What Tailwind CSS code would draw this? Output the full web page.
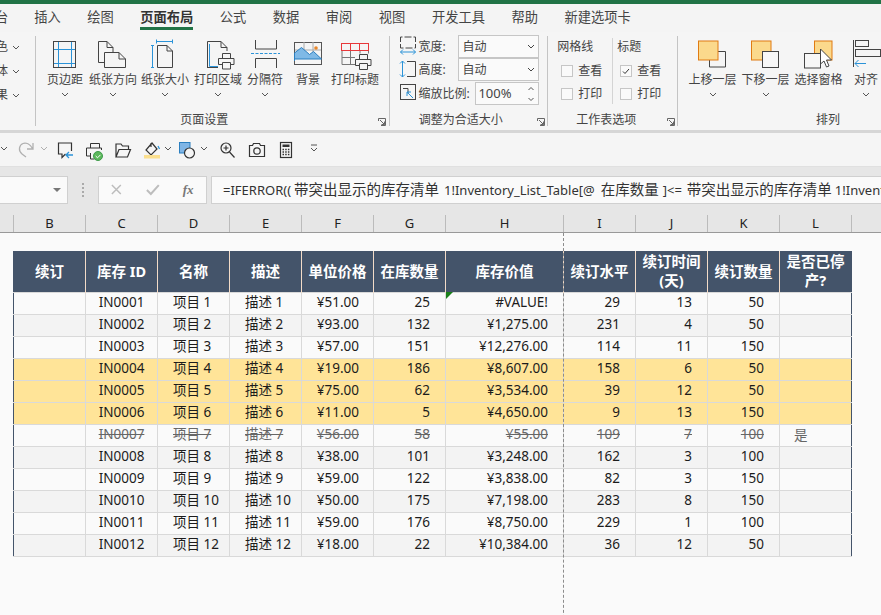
<!DOCTYPE html>
<html lang="zh">
<head>
    <meta charset="UTF-8">
    <title>库存清单</title>
    <script src="https://cdn.jsdelivr.net/npm/@tailwindcss/browser@4"></script>
</head>
<body class="w-[881px] h-[615px] overflow-hidden bg-[#fafafa] text-[#444] text-[12px] font-['Noto_Sans','Noto_Sans_CJK_SC',sans-serif]">

    <!-- Title strip -->
    <div class="h-[4px] bg-[#217346]"></div>

    <!-- Tabs -->
    <nav class="h-[28px] bg-[#f4f4f4] flex items-center gap-[26.5px] text-[13.25px] text-[#444] whitespace-nowrap -ml-[5px]">
        <span>台</span>
        <span class="-ml-[0.5px]">插入</span>
        <span>绘图</span>
        <span class="relative font-bold text-[#333]">页面布局<span class="absolute left-0 right-0 top-[19px] h-[3px] bg-[#217346]"></span></span>
        <span>公式</span>
        <span>数据</span>
        <span>审阅</span>
        <span>视图</span>
        <span>开发工具</span>
        <span>帮助</span>
        <span>新建选项卡</span>
    </nav>

    <!-- Ribbon -->
    <div class="h-[98px] bg-[#f5f5f5] flex overflow-hidden">
        <!-- Clipped first group -->
        <div class="w-[35px] pt-[3px] flex flex-col">
            <div class="h-[24px] flex items-center -ml-[4px] gap-[4px]"><span>色</span><svg class="w-[8px] h-[5px]" viewBox="0 0 8 5" fill="none" stroke="#555"><path d="M1 1l3 3 3-3"/></svg></div>
            <div class="h-[24px] flex items-center -ml-[4px] gap-[4px]"><span>体</span><svg class="w-[8px] h-[5px]" viewBox="0 0 8 5" fill="none" stroke="#555"><path d="M1 1l3 3 3-3"/></svg></div>
            <div class="h-[24px] flex items-center -ml-[4px] gap-[4px]"><span>果</span><svg class="w-[8px] h-[5px]" viewBox="0 0 8 5" fill="none" stroke="#555"><path d="M1 1l3 3 3-3"/></svg></div>
        </div>
        <div class="w-px my-1 bg-[#c4c4c4]"></div>

        <!-- 页面设置 -->
        <div class="relative w-[354px] pl-[5px] pt-[6px] flex flex-col">
            <div class="flex">
                <div class="w-[48px] flex flex-col items-center">
                    <svg class="w-[48px] h-[32px]" viewBox="41 38 48 32" fill="none"><path d="M58.5 41v27M71.5 41v27M53 49.5h23M53 63.5h23" stroke="#2b93d8"/><rect x="53.5" y="41.5" width="22" height="26" stroke="#444"/></svg>
                    <span class="leading-[18px] mt-[1px] whitespace-nowrap">页边距</span>
                    <svg class="w-[8px] h-[5px] mt-[3px]" viewBox="0 0 8 5" fill="none" stroke="#555"><path d="M1 1l3 3 3-3"/></svg>
                </div>
                <div class="w-[48px] flex flex-col items-center">
                    <svg class="w-[48px] h-[32px]" viewBox="89 38 48 32" fill="none" stroke="#444"><path d="M104 62.5h-5.500v-21H107l6 6v4.500M107 41.500v6h6"/><path d="M104.500 52.500H119l6.500 6.500v8.500h-21zM119 52.500V59h6.500"/></svg>
                    <span class="leading-[18px] mt-[1px] whitespace-nowrap">纸张方向</span>
                    <svg class="w-[8px] h-[5px] mt-[3px]" viewBox="0 0 8 5" fill="none" stroke="#555"><path d="M1 1l3 3 3-3"/></svg>
                </div>
                <div class="w-[56px] flex flex-col items-center">
                    <svg class="w-[56px] h-[32px]" viewBox="137 38 56 32" fill="none"><path d="M156 41.500h17M156.500 39.500v4M172.500 39.500v4M152.500 45v23M151 45.500h3M151 67.500h3" stroke="#2b93d8"/><path d="M157.500 45.500H167l5.500 5.500v16.500h-15zM167 45.500V51h5.500" stroke="#444"/></svg>
                    <span class="leading-[18px] mt-[1px] whitespace-nowrap">纸张大小</span>
                    <svg class="w-[8px] h-[5px] mt-[3px]" viewBox="0 0 8 5" fill="none" stroke="#555"><path d="M1 1l3 3 3-3"/></svg>
                </div>
                <div class="w-[50px] flex flex-col items-center">
                    <svg class="w-[50px] h-[32px]" viewBox="193 38 50 32" fill="none"><path d="M207.500 68V41.500H221l6 6V51M221 41.500v6h6" stroke="#444"/><path d="M209.500 44v22.500H218" stroke="#2b93d8"/><path d="M207.500 67.500H218" stroke="#444"/><path d="M222.500 58.500v-5h8v5M222.500 64.500h-4v-6h15.500v6h-3.500M222.500 62.500h8v6.500h-8z" stroke="#444" fill="#f5f5f5"/></svg>
                    <span class="leading-[18px] mt-[1px] whitespace-nowrap">打印区域</span>
                    <svg class="w-[8px] h-[5px] mt-[3px]" viewBox="0 0 8 5" fill="none" stroke="#555"><path d="M1 1l3 3 3-3"/></svg>
                </div>
                <div class="w-[44px] flex flex-col items-center">
                    <svg class="w-[44px] h-[32px]" viewBox="243 38 44 32" fill="none"><path d="M255.500 40v9h21v-9M255.500 68v-9.500h21V68" stroke="#444"/><path d="M251 53.500h29" stroke="#2b93d8" stroke-dasharray="3 1.500"/></svg>
                    <span class="leading-[18px] mt-[1px] whitespace-nowrap">分隔符</span>
                    <svg class="w-[8px] h-[5px] mt-[3px]" viewBox="0 0 8 5" fill="none" stroke="#555"><path d="M1 1l3 3 3-3"/></svg>
                </div>
                <div class="w-[42px] flex flex-col items-center">
                    <svg class="w-[42px] h-[32px]" viewBox="287 38 42 32" fill="none"><rect x="294.500" y="42.500" width="27" height="22" stroke="#555"/><path d="M304 42v10M313 42v10M295 50h26" stroke="#aaa"/><path d="M294.500 61v-8l7-5.500 8 7 4-3 8 7.500H294.500z" fill="#7fb9e6" stroke="#2b7fc0"/><circle cx="316" cy="48" r="1.800" fill="#e8862a"/></svg>
                    <span class="leading-[18px] mt-[1px] whitespace-nowrap">背景</span>
                </div>
                <div class="w-[52px] flex flex-col items-center">
                    <svg class="w-[52px] h-[32px]" viewBox="329 38 52 32" fill="none"><path d="M342 50.500v14h13M342 57.500h13M350.500 50.500v14M360 50.500v3M368.500 50.500v3" stroke="#777"/><rect x="341.500" y="43.500" width="27" height="7" stroke="#e8383a"/><path d="M350.500 43.500v7M359.500 43.500v7" stroke="#e8383a"/><path d="M359.500 59.500v-5h8v5M359.500 65.500h-4v-6h15.500v6h-3.500M359.500 63.500h8v6h-8z" stroke="#444" fill="#f5f5f5"/></svg>
                    <span class="leading-[18px] mt-[1px] whitespace-nowrap">打印标题</span>
                </div>
            </div>
            <div class="mt-auto mb-[1px] leading-[18px] text-center pr-[22px]">页面设置</div>
            <svg class="absolute right-[3px] bottom-[4px] w-[8px] h-[8px]" viewBox="0 0 8 8" fill="none" stroke="#666"><path d="M.5 3V.5h7v7H3M2 2l4.500 4.500M6.500 3.500v3h-3"/></svg>
        </div>
        <div class="w-px my-1 bg-[#c4c4c4]"></div>

        <!-- 调整为合适大小 -->
        <div class="relative w-[157px] pt-[3px] flex flex-col">
            <div class="flex items-center h-[23px]">
                <svg class="w-[28px] h-[23px]" viewBox="391 35 28 23" fill="none"><path d="M401.500 42v-5h15v5M401.500 44v4h15v-4" stroke="#444" stroke-dasharray="7 2"/><path d="M401.500 52h15M404 49.500L401.500 52l2.500 2.500M414 49.500l2.500 2.500-2.500 2.500" stroke="#2b93d8"/></svg>
                <span class="w-[40px] leading-[18px]">宽度:</span>
                <div class="w-[81px] h-[23px] border border-[#c6c6c6] bg-[#fafafa] flex items-center justify-between pl-[3px] pr-[3px]"><span>自动</span><svg class="w-[8px] h-[5px]" viewBox="0 0 8 5" fill="none" stroke="#444"><path d="M1 1l3 3 3-3"/></svg></div>
            </div>
            <div class="flex items-center h-[23px]">
                <svg class="w-[28px] h-[23px]" viewBox="391 58 28 23" fill="none"><path d="M403.500 61v16M401 63.500l2.500-2.500 2.500 2.500M401 74.500l2.500 2.500 2.500-2.500" stroke="#2b93d8"/><path d="M408 61.500h8.500v15H408" stroke="#444"/></svg>
                <span class="w-[40px] leading-[18px]">高度:</span>
                <div class="w-[81px] h-[23px] border border-[#c6c6c6] bg-[#fafafa] flex items-center justify-between pl-[3px] pr-[3px]"><span>自动</span><svg class="w-[8px] h-[5px]" viewBox="0 0 8 5" fill="none" stroke="#444"><path d="M1 1l3 3 3-3"/></svg></div>
            </div>
            <div class="flex items-center h-[23px] mt-[1px]">
                <svg class="w-[28px] h-[23px]" viewBox="391 82 28 23" fill="none"><rect x="401.500" y="84.500" width="15" height="15" stroke="#444"/><path d="M405 88.500h4v5M405 88.500h-1" stroke="#444"/><path d="M414 98l-6-6M408 96v-4h4" stroke="#2b93d8"/></svg>
                <span class="w-[57px] leading-[18px] whitespace-nowrap">缩放比例:</span>
                <div class="w-[64px] h-[23px] border border-[#c6c6c6] bg-[#fafafa] flex items-center justify-between pl-[2px] pr-[3px]"><span class="text-[13px]">100%</span><svg class="w-[8px] h-[16px]" viewBox="0 0 8 16" fill="none" stroke="#555"><path d="M1.500 4L4 1.500 6.500 4M1.500 12L4 14.500 6.500 12"/></svg></div>
            </div>
            <div class="mt-auto mb-[1px] leading-[18px] text-center pr-[16px]">调整为合适大小</div>
            <svg class="absolute right-[2px] bottom-[4px] w-[8px] h-[8px]" viewBox="0 0 8 8" fill="none" stroke="#666"><path d="M.5 3V.5h7v7H3M2 2l4.500 4.500M6.500 3.500v3h-3"/></svg>
        </div>
        <div class="w-px my-1 bg-[#c4c4c4]"></div>

        <!-- 工作表选项 -->
        <div class="relative w-[129px] flex flex-col">
            <div class="flex pt-[6px]">
                <div class="w-[65px] border-r border-[#d4d4d4] pl-[9px] h-[66px] flex flex-col">
                    <span class="leading-[18px]">网格线</span>
                    <div class="flex items-center mt-[6px] h-[18px]"><span class="w-[12px] h-[12px] border border-[#c6c6c6] bg-[#fafafa] ml-[4px] mr-[5px]"></span><span>查看</span></div>
                    <div class="flex items-center mt-[5px] h-[18px]"><span class="w-[12px] h-[12px] border border-[#c6c6c6] bg-[#fafafa] ml-[4px] mr-[5px]"></span><span>打印</span></div>
                </div>
                <div class="pl-[4px] flex flex-col">
                    <span class="leading-[18px]">标题</span>
                    <div class="flex items-center mt-[6px] h-[18px]"><span class="w-[12px] h-[12px] border border-[#c6c6c6] bg-[#fafafa] ml-[3px] mr-[5px] flex items-center justify-center"><svg class="w-[8px] h-[7px]" viewBox="0 0 8 7" fill="none" stroke="#333"><path d="M1 3.500L3 5.500 7 1"/></svg></span><span>查看</span></div>
                    <div class="flex items-center mt-[5px] h-[18px]"><span class="w-[12px] h-[12px] border border-[#c6c6c6] bg-[#fafafa] ml-[3px] mr-[5px]"></span><span>打印</span></div>
                </div>
            </div>
            <div class="mt-auto mb-[1px] leading-[18px] pl-[28px]">工作表选项</div>
            <svg class="absolute right-[2px] bottom-[4px] w-[8px] h-[8px]" viewBox="0 0 8 8" fill="none" stroke="#666"><path d="M.5 3V.5h7v7H3M2 2l4.500 4.500M6.500 3.500v3h-3"/></svg>
        </div>
        <div class="w-px my-1 bg-[#c4c4c4]"></div>

        <!-- 排列 -->
        <div class="w-[203px] pl-[8px] pt-[6px] flex flex-col">
            <div class="flex">
                <div class="w-[53px] flex flex-col items-center">
                    <svg class="w-[53px] h-[32px]" viewBox="686 38 53 32" fill="none"><path d="M718 51.500h7.500v15.500H709.500v-7" stroke="#444"/><rect x="698.500" y="41" width="19.500" height="19" fill="#fbd98c" stroke="#e07b12"/></svg>
                    <span class="leading-[18px] mt-[1px] whitespace-nowrap">上移一层</span>
                    <svg class="w-[8px] h-[5px] mt-[3px]" viewBox="0 0 8 5" fill="none" stroke="#555"><path d="M1 1l3 3 3-3"/></svg>
                </div>
                <div class="w-[53px] flex flex-col items-center">
                    <svg class="w-[53px] h-[32px]" viewBox="739 38 53 32" fill="none"><rect x="751.500" y="41" width="19.500" height="19" fill="#fbd98c" stroke="#e07b12"/><rect x="762.500" y="51.500" width="16" height="16" fill="#f7f7f7" stroke="#444"/></svg>
                    <span class="leading-[18px] mt-[1px] whitespace-nowrap">下移一层</span>
                    <svg class="w-[8px] h-[5px] mt-[3px]" viewBox="0 0 8 5" fill="none" stroke="#555"><path d="M1 1l3 3 3-3"/></svg>
                </div>
                <div class="w-[53px] flex flex-col items-center">
                    <svg class="w-[53px] h-[32px]" viewBox="792 38 53 32" fill="none"><rect x="814.500" y="41" width="17.500" height="19" fill="#fbd98c" stroke="#e07b12"/><rect x="804.500" y="53.500" width="16" height="14.500" fill="#f7f7f7" stroke="#444"/><path d="M820.500 49v15l3.500-3 2.500 6 2.500-1-2.500-6h5z" fill="#fff" stroke="#444"/></svg>
                    <span class="leading-[18px] mt-[1px] whitespace-nowrap">选择窗格</span>
                </div>
                <div class="w-[42px] flex flex-col items-center">
                    <svg class="w-[42px] h-[32px]" viewBox="845 38 42 32" fill="none"><path d="M853.500 40v27" stroke="#444"/><rect x="855.500" y="40.500" width="13" height="6" stroke="#444"/><rect x="855.500" y="49.500" width="25" height="7" stroke="#444"/><path d="M855 63.500h11M858.500 60L855 63.500l3.500 3.500" stroke="#2b93d8"/></svg>
                    <span class="leading-[18px] mt-[1px] whitespace-nowrap">对齐</span>
                    <svg class="w-[8px] h-[5px] mt-[3px]" viewBox="0 0 8 5" fill="none" stroke="#555"><path d="M1 1l3 3 3-3"/></svg>
                </div>
            </div>
            <div class="mt-auto mb-[1px] leading-[18px] pl-[130px]">排列</div>
        </div>
    </div>
    <div class="h-[3px] bg-[#d6d6d6]"></div>

    <!-- Quick access toolbar -->
    <div class="h-[34px] bg-[#f5f5f5] flex border-b border-[#e0e0e0]">
        <svg class="w-[12px] h-[34px]" viewBox="0 133 12 34" fill="none" stroke="#555"><path d="M1 147l3 3 3-3"/></svg>
        <svg class="w-[28px] h-[34px]" viewBox="12 133 28 34" fill="none" stroke="#b0b0b0" stroke-width="1.300"><path d="M33 143v6h-6M32.500 148.500C30 144 26 142.500 23 143.500 19 145 18 151 22 154l4 3"/></svg>
        <svg class="w-[10px] h-[34px]" viewBox="40 133 10 34" fill="none" stroke="#b0b0b0"><path d="M41 147l3 3 3-3"/></svg>
        <svg class="w-[30px] h-[34px]" viewBox="50 133 30 34" fill="none"><path d="M71.500 151v-8H58.500v11H62v3.500l3.500-3.500" stroke="#333" stroke-width="1.200"/><path d="M73 155h-7M69 152l-3 3 3 3" stroke="#2b93d8" stroke-width="1.300"/></svg>
        <svg class="w-[30px] h-[34px]" viewBox="80 133 30 34" fill="none" stroke="#333"><path d="M90.500 148v-4.500h9v4.500M90 156h-3.500v-8h15v2M90.500 153v6h4"/><circle cx="98" cy="156" r="4.500" fill="#5cb85c" stroke="#3f9b4c"/><path d="M95.700 156l1.800 1.800 3-3" stroke="#fff"/></svg>
        <svg class="w-[30px] h-[34px]" viewBox="110 133 30 34" fill="none" stroke="#333" stroke-width="1.200"><path d="M116 157v-13h5l1.500 2h6v3.500M116 157l3-7.500h11.500l-3 7.500z"/></svg>
        <svg class="w-[24px] h-[34px]" viewBox="140 133 24 34" fill="none"><path d="M152 143l5 6-6 6-5-5zM151 143v4" stroke="#333" stroke-width="1.200"/><path d="M158 146l1.500 3" stroke="#2b93d8" stroke-width="1.300"/><rect x="144" y="155" width="16" height="3.500" fill="#fbdf8e"/></svg>
        <svg class="w-[10px] h-[34px]" viewBox="164 133 10 34" fill="none" stroke="#555"><path d="M165 147l3 3 3-3"/></svg>
        <svg class="w-[26px] h-[34px]" viewBox="174 133 26 34" fill="none"><rect x="179.500" y="142.500" width="10.500" height="10.500" fill="#7fb5e6" stroke="#2b7fc0"/><circle cx="189.500" cy="153" r="5" fill="#f5f5f5" stroke="#333" stroke-width="1.200"/></svg>
        <svg class="w-[10px] h-[34px]" viewBox="200 133 10 34" fill="none" stroke="#555"><path d="M201 147l3 3 3-3"/></svg>
        <svg class="w-[30px] h-[34px]" viewBox="210 133 30 34" fill="none" stroke="#333" stroke-width="1.200"><circle cx="226" cy="148" r="5"/><path d="M229.500 152l5 5.500M226 145.500v5M223.500 148h5"/></svg>
        <svg class="w-[29px] h-[34px]" viewBox="240 133 29 34" fill="none" stroke="#333" stroke-width="1.200"><path d="M249.500 145.500h3l1-2h6l1 2h4v11h-15z"/><circle cx="257" cy="151" r="3.200"/></svg>
        <svg class="w-[28px] h-[34px]" viewBox="269 133 28 34" fill="none"><rect x="280.500" y="142.500" width="11" height="15" stroke="#333" stroke-width="1.200"/><rect x="282.500" y="144.500" width="7" height="2.500" fill="#333"/><path d="M282.500 149.500h7M282.500 152h7M282.500 154.500h7" stroke="#333" stroke-width="1.300" stroke-dasharray="1.500 1.200"/></svg>
        <svg class="w-[30px] h-[34px]" viewBox="297 133 30 34" fill="none" stroke="#555"><path d="M311 145h6M311 148l3 3 3-3"/></svg>
    </div>

    <!-- Formula bar -->
    <div class="h-[46px] bg-[#e6e6e6] pt-[9px] flex items-start">
        <div class="w-[68px] h-[28px] bg-[#fafafa] border border-l-0 border-[#d0d0d0] flex items-center justify-end pr-[6px]">
            <span class="w-0 h-0 border-x-[4px] border-x-transparent border-t-[4px] border-t-[#777]"></span>
        </div>
        <div class="w-[30px] h-[28px] flex flex-col items-center justify-center gap-[2px]">
            <span class="w-[2px] h-[2px] bg-[#aaa]"></span><span class="w-[2px] h-[2px] bg-[#aaa]"></span><span class="w-[2px] h-[2px] bg-[#aaa]"></span><span class="w-[2px] h-[2px] bg-[#aaa]"></span>
        </div>
        <div class="w-[109px] h-[28px] bg-[#fafafa] border border-[#d0d0d0] flex items-center">
            <svg class="w-[36px] h-[26px]" viewBox="0 0 36 26" fill="none" stroke="#bdbdbd" stroke-width="1.500"><path d="M13 8l9 9M22 8l-9 9"/></svg>
            <svg class="w-[36px] h-[26px]" viewBox="0 0 36 26" fill="none" stroke="#bdbdbd" stroke-width="2"><path d="M12 13l4 4 8-9"/></svg>
            <span class="w-[36px] text-center text-[#777] italic font-bold font-['Liberation_Serif',serif] text-[13px]">fx</span>
        </div>
        <div class="ml-[4px] flex-1 h-[28px] bg-[#fafafa] border border-r-0 border-[#d0d0d0] pl-[11px] flex items-center whitespace-nowrap overflow-hidden text-[13px] text-[#333]">
            <span>=IFERROR((<span class="text-[14.5px] ml-[3px] mr-[5px]">带突出显示的库存清单</span>1!Inventory_List_Table[@<span class="text-[14.5px] ml-[6px] mr-[4px]">在库数量</span>]&lt;=<span class="text-[14.5px] ml-[5px] mr-[3px]">带突出显示的库存清单</span>1!Inventory_List_Table[@<span class="text-[14.5px]">续订水平</span>]))</span>
        </div>
    </div>

    <!-- Column headers -->
    <div class="h-[20px] bg-[#e6e6e6] border-b border-[#999] flex text-[13px] leading-[17px] pt-[2px] text-[#222] text-center">
        <div class="w-[14px] border-r border-[#bbb]"></div>
        <div class="w-[72px] border-r border-[#bbb]">B</div>
        <div class="w-[72px] border-r border-[#bbb]">C</div>
        <div class="w-[72px] border-r border-[#bbb]">D</div>
        <div class="w-[72px] border-r border-[#bbb]">E</div>
        <div class="w-[72px] border-r border-[#bbb]">F</div>
        <div class="w-[72px] border-r border-[#bbb]">G</div>
        <div class="w-[118px] border-r border-[#bbb]">H</div>
        <div class="w-[72px] border-r border-[#bbb]">I</div>
        <div class="w-[72px] border-r border-[#bbb]">J</div>
        <div class="w-[72px] border-r border-[#bbb]">K</div>
        <div class="w-[72px] border-r border-[#bbb]">L</div>
    </div>

    <!-- Sheet -->
    <div class="relative pl-[13px] pt-[18px]">
        <table class="table-fixed border-collapse w-[839px] text-[13.5px] text-[#1c1c1c] border-x border-[#44546a]">
            <colgroup>
                <col class="w-[72px]"><col class="w-[72px]"><col class="w-[72px]"><col class="w-[72px]"><col class="w-[72px]"><col class="w-[72px]"><col class="w-[118px]"><col class="w-[72px]"><col class="w-[72px]"><col class="w-[72px]"><col class="w-[72px]">
            </colgroup>
            <thead>
                <tr class="h-[41px] bg-[#44546a] text-white text-[14.5px] font-bold leading-[19px]">
                    <th class="border-r border-[#f3dcc8]">续订</th>
                    <th class="border-r border-[#f3dcc8]">库存 ID</th>
                    <th class="border-r border-[#f3dcc8]">名称</th>
                    <th class="border-r border-[#f3dcc8]">描述</th>
                    <th class="border-r border-[#f3dcc8]">单位价格</th>
                    <th class="border-r border-[#f3dcc8]">在库数量</th>
                    <th class="border-r border-[#f3dcc8]">库存价值</th>
                    <th class="border-r border-[#f3dcc8]">续订水平</th>
                    <th class="border-r border-[#f3dcc8] px-[4px]">续订时间(天)</th>
                    <th class="border-r border-[#f3dcc8]">续订数量</th>
                    <th class="px-[4px]">是否已停产?</th>
                </tr>
            </thead>
            <tbody id="rows"></tbody>
        </table>
        <!-- page break line, lies over the table -->
        <div class="absolute left-[563px] top-0 h-[400px] border-l border-dashed border-[#8c8c8c]"></div>
        <!-- error marker of H row 1 -->
        <div class="absolute left-[446px] top-[59px] w-0 h-0 border-t-[7px] border-t-[#1a7f1a] border-r-[7px] border-r-transparent"></div>
    </div>

    <script>
        var data = [
            [1, '51', '25', '#VALUE!', '29', '13', '50'],
            [2, '93', '132', '¥1,275.00', '231', '4', '50'],
            [3, '57', '151', '¥12,276.00', '114', '11', '150'],
            [4, '19', '186', '¥8,607.00', '158', '6', '50'],
            [5, '75', '62', '¥3,534.00', '39', '12', '50'],
            [6, '11', '5', '¥4,650.00', '9', '13', '150'],
            [7, '56', '58', '¥55.00', '109', '7', '100'],
            [8, '38', '101', '¥3,248.00', '162', '3', '100'],
            [9, '59', '122', '¥3,838.00', '82', '3', '150'],
            [10, '50', '175', '¥7,198.00', '283', '8', '150'],
            [11, '59', '176', '¥8,750.00', '229', '1', '100'],
            [12, '18', '22', '¥10,384.00', '36', '12', '50']
        ];
        var html = '';
        data.forEach(function (r) {
            var n = r[0];
            var id = 'IN' + String(n).padStart(4, '0');
            var row = 'h-[22px] bg-[#fafafa]';
            if (n % 2 == 0) row = 'h-[22px] bg-[#f3f3f3]';
            if (n >= 4 && n <= 6) row = 'h-[22px] bg-[#ffe498]';
            if (n == 7) row = 'h-[22px] bg-[#fafafa] text-[#666] line-through';
            var td = 'border border-[#d9d9d9] leading-none';
            html += '<tr class="' + row + '">' +
                '<td class="border border-[#d9d9d9] border-l-0"></td>' +
                '<td class="' + td + ' text-center">' + id + '</td>' +
                '<td class="' + td + ' pl-[15px] whitespace-nowrap">项目 ' + n + '</td>' +
                '<td class="' + td + ' pl-[15px] whitespace-nowrap">描述 ' + n + '</td>' +
                '<td class="' + td + ' text-right pr-[14px]">¥' + r[1] + '.00</td>' +
                '<td class="' + td + ' text-right pr-[15px]">' + r[2] + '</td>' +
                '<td class="' + td + ' text-right pr-[15px]">' + r[3] + '</td>' +
                '<td class="' + td + ' text-right pr-[15px]">' + r[4] + '</td>' +
                '<td class="' + td + ' text-right pr-[15px]">' + r[5] + '</td>' +
                '<td class="' + td + ' text-right pr-[15px]">' + r[6] + '</td>' +
                '<td class="border border-[#d9d9d9] border-r-0 pl-[14px]">' + (n == 7 ? '<span class="inline-block">是</span>' : '') + '</td>' +
                '</tr>';
        });
        document.getElementById('rows').innerHTML = html;
    </script>
</body>
</html>
